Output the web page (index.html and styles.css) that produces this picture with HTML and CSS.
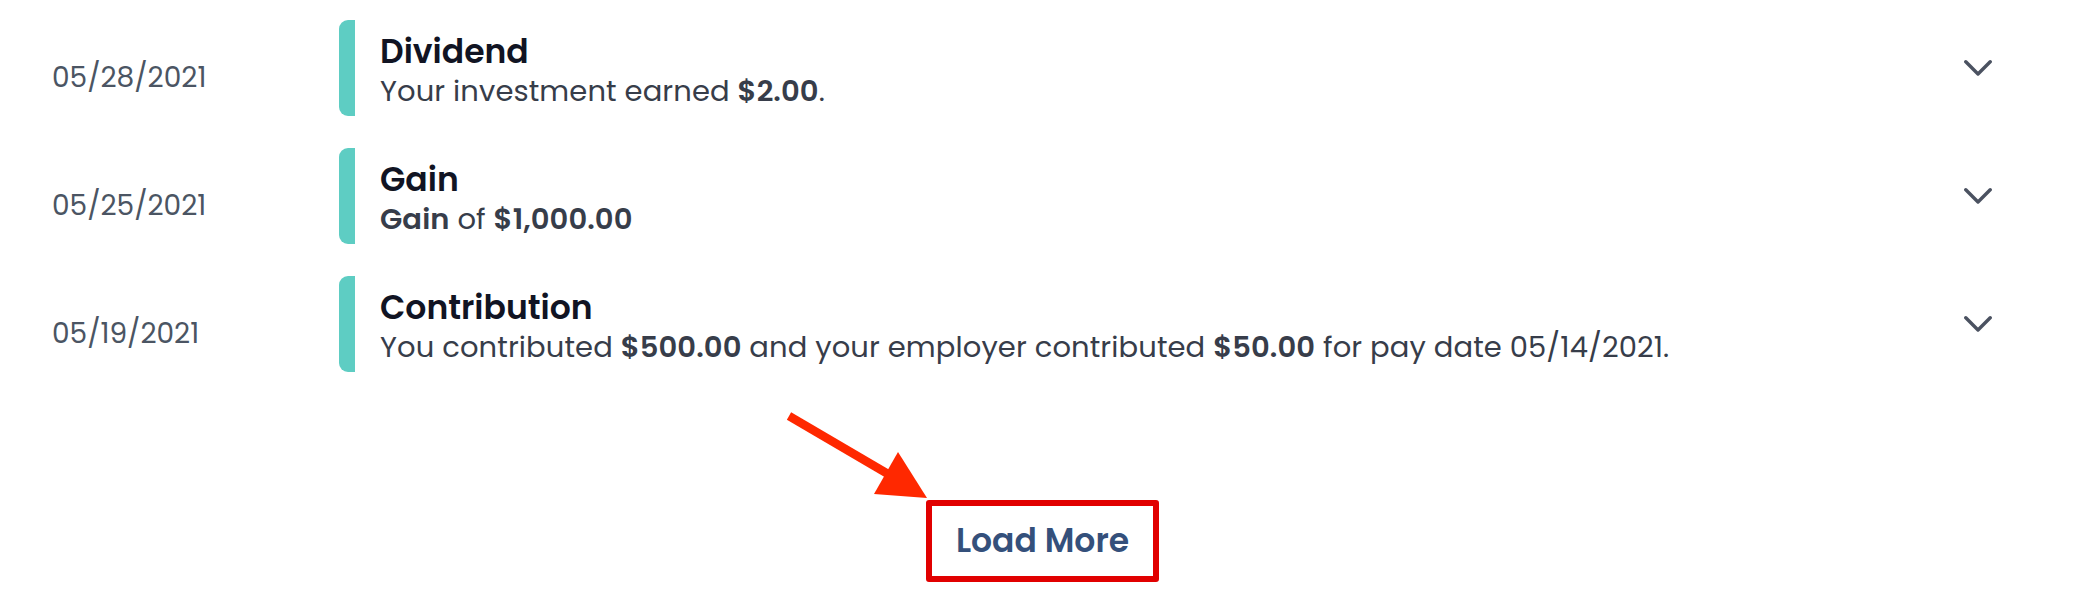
FILE: index.html
```html
<!DOCTYPE html>
<html lang="en">
<head>
<meta charset="utf-8">
<title>Activity</title>
<link rel="stylesheet" href="styles.css">
</head>
<body>
<main class="activity">
  <ul class="list">
    <li class="row">
      <div class="date">05/28/2021</div>
      <div class="bar"></div>
      <div class="content">
        <div class="title">Dividend</div>
        <div class="desc">Your investment earned <b>$2.00</b>.</div>
      </div>
      <button class="toggle" aria-label="Expand">
        <svg viewBox="0 0 28 16" width="28" height="16"><polyline points="1.8,1.8 14,14 26.2,1.8"/></svg>
      </button>
    </li>
    <li class="row">
      <div class="date">05/25/2021</div>
      <div class="bar"></div>
      <div class="content">
        <div class="title">Gain</div>
        <div class="desc"><b>Gain</b> of <b>$1,000.00</b></div>
      </div>
      <button class="toggle" aria-label="Expand">
        <svg viewBox="0 0 28 16" width="28" height="16"><polyline points="1.8,1.8 14,14 26.2,1.8"/></svg>
      </button>
    </li>
    <li class="row">
      <div class="date">05/19/2021</div>
      <div class="bar"></div>
      <div class="content">
        <div class="title">Contribution</div>
        <div class="desc">You contributed <b>$500.00</b> and your employer contributed <b>$50.00</b> for pay date 05/14/2021.</div>
      </div>
      <button class="toggle" aria-label="Expand">
        <svg viewBox="0 0 28 16" width="28" height="16"><polyline points="1.8,1.8 14,14 26.2,1.8"/></svg>
      </button>
    </li>
  </ul>
  <div class="load-wrap">
    <div class="load-anchor">
      <svg class="arrow" viewBox="0 0 160 110" width="160" height="110">
        <line x1="10" y1="11" x2="109" y2="69"/>
        <polygon points="148,93 95,89 119,47"/>
      </svg>
      <button class="load-more">Load More</button>
    </div>
  </div>
</main>
</body>
</html>
```
FILE: styles.css
```css
* {
  box-sizing: border-box;
}

html, body {
  margin: 0;
  padding: 0;
  background: #ffffff;
}

body {
  font-family: "Poppins", "DejaVu Sans", sans-serif;
  width: 2076px;
  height: 610px;
  overflow: hidden;
}

.list {
  list-style: none;
  margin: 0;
  padding: 20px 0 0 0;
  display: flex;
  flex-direction: column;
  gap: 32px;
}

.row {
  display: flex;
  align-items: center;
  height: 96px;
  padding-left: 52px;
  padding-right: 84px;
}

.date {
  align-self: flex-start;
  width: 287px;
  padding-top: 43px;
  font-size: 28px;
  line-height: 30px;
  color: #4b5563;
}

.bar {
  align-self: stretch;
  width: 16px;
  background: #5ecdc3;
  border-radius: 9px 0 0 9px;
}

.content {
  align-self: flex-start;
  flex: 1;
  padding-left: 25px;
  padding-top: 13px;
}

.title {
  font-size: 33px;
  line-height: 38px;
  font-weight: 600;
  color: #111423;
}

.desc {
  font-size: 29px;
  line-height: 40px;
  letter-spacing: 0.1px;
  color: #373d4a;
}

.desc b {
  font-weight: 600;
}

.toggle {
  border: 0;
  background: transparent;
  padding: 0;
  width: 28px;
  height: 16px;
  display: flex;
  cursor: pointer;
}

.toggle svg polyline {
  fill: none;
  stroke: #4b5261;
  stroke-width: 3.4;
  stroke-linecap: round;
  stroke-linejoin: round;
}

.load-wrap {
  display: flex;
  justify-content: center;
  padding-left: 9px;
  margin-top: 128px;
}

.load-anchor {
  position: relative;
}

.load-more {
  display: block;
  height: 82px;
  padding: 0 24px;
  border: 6px solid #e10000;
  border-radius: 3px;
  background: #ffffff;
  font-family: "Poppins", "DejaVu Sans", sans-serif;
  font-size: 33px;
  font-weight: 600;
  line-height: 70px;
  color: #34507b;
  cursor: pointer;
}

.arrow {
  position: absolute;
  left: -147px;
  top: -95px;
  overflow: visible;
}

.arrow line {
  stroke: #ff2800;
  stroke-width: 8.5;
}

.arrow polygon {
  fill: #ff2800;
}
```
